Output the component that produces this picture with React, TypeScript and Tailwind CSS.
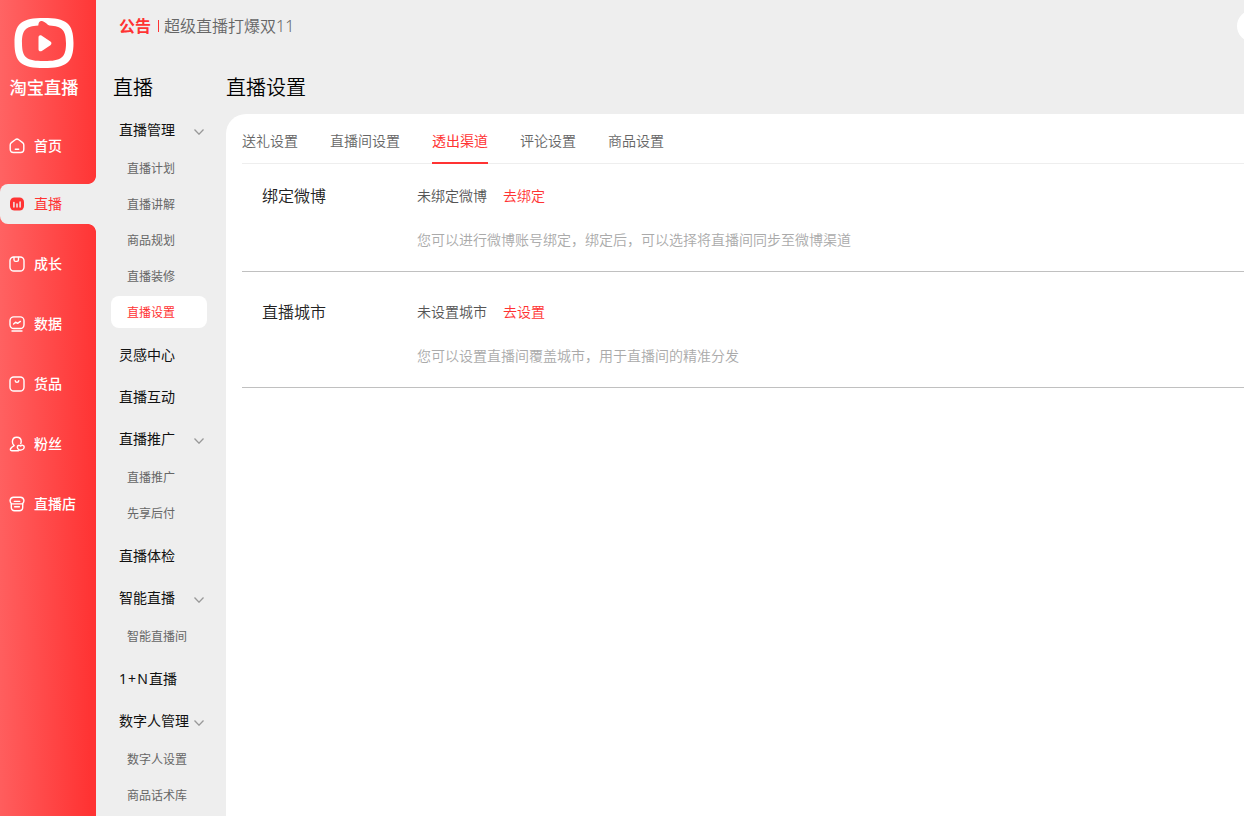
import type { ReactNode } from "react";
import clsx from "clsx";

const NAV: { label: string; icon: ReactNode }[] = [
  {
    label: "首页",
    icon: (
      <>
        <path d="M1.2 7c0-1 .4-1.8 1.2-2.4l3.8-2.9c1-.8 2.6-.8 3.6 0l3.8 2.9c.8.6 1.2 1.400 1.2 2.4v4.300c0 2-1.200 3.200-3.200 3.200H4.400c-2 0-3.200-1.200-3.200-3.200z" />
        <path d="M6.300 11.200h3.400" />
      </>
    ),
  },
  {
    label: "直播",
    icon: (
      <>
        <rect x="1" y="1.5" width="14" height="13" rx="4.5" fill="currentColor" stroke="none" />
        <path d="M4.9 6.5V11M8 8v3M11.1 6v5" stroke="#eee" strokeWidth="1.5" />
      </>
    ),
  },
  {
    label: "成长",
    icon: (
      <>
        <rect x="1" y="1" width="14" height="14" rx="3.8" />
        <path d="M5 1.500v2.200c0 1 .6 1.700 1.600 1.700h1.300c1 0 1.600-.7 1.600-1.700V1.500" />
      </>
    ),
  },
  {
    label: "数据",
    icon: (
      <>
        <rect x="1" y=".9" width="14" height="11.6" rx="3.8" />
        <path d="M4.600 8l2-1.800 2 1.200 2.800-2M3 15h10" />
      </>
    ),
  },
  {
    label: "货品",
    icon: (
      <>
        <rect x="1" y="1" width="14" height="14" rx="3.8" />
        <path d="M6.200 4.600c.2 2.400 3.400 2.400 3.600 0" />
      </>
    ),
  },
  {
    label: "粉丝",
    icon: (
      <>
        <path d="M9.500 14.700H2.700c-1.300 0-1.700-1.100-1-2.200.8-1.300 2-2.200 3.500-2.900C4 8.700 3.400 7.300 3.400 5.700c0-2.700 1.700-4.500 4.400-4.500s4.400 1.800 4.400 4.300c0 .9-.2 1.500-.5 2.200" />
        <path d="M10.800 14.300c-1.700-.8-2.500-1.800-2.500-3.100 0-1.800 2-2.400 3.200-1.100 1.300-1.500 3.700-.9 3.700 1 0 1.600-1.700 3.200-4.400 3.200z" />
      </>
    ),
  },
  {
    label: "直播店",
    icon: (
      <>
        <path d="M4.600 1.200h6.800c2 0 3.300 1.200 3.500 3.200.1 1.400-.3 2.400-1.200 3v3.800c0 2.100-1.200 3.500-3.300 3.500H5.600c-2.100 0-3.300-1.400-3.300-3.500V7.400c-.9-.6-1.300-1.600-1.200-3 .2-2 1.500-3.200 3.500-3.200z" />
        <path d="M5.300 5.400h5.400M2.300 7.900h11.400M5.600 10.700h4.800" />
      </>
    ),
  },
];

const MENU: { label: string; prefix?: string; children?: string[] }[] = [
  { label: "直播管理", children: ["直播计划", "直播讲解", "商品规划", "直播装修", "直播设置"] },
  { label: "灵感中心" },
  { label: "直播互动" },
  { label: "直播推广", children: ["直播推广", "先享后付"] },
  { label: "直播体检" },
  { label: "智能直播", children: ["智能直播间"] },
  { prefix: "1+N", label: "直播" },
  { label: "数字人管理", children: ["数字人设置", "商品话术库"] },
];

const TABS = ["送礼设置", "直播间设置", "透出渠道", "评论设置", "商品设置"];

const SETTINGS = [
  {
    title: "绑定微博",
    status: "未绑定微博",
    action: "去绑定",
    desc: "您可以进行微博账号绑定，绑定后，可以选择将直播间同步至微博渠道",
  },
  {
    title: "直播城市",
    status: "未设置城市",
    action: "去设置",
    desc: "您可以设置直播间覆盖城市，用于直播间的精准分发",
  },
];

function Logo() {
  return (
    <svg width="60" height="51" viewBox="0 0 60 51" fill="#fff" className="block">
      <path
        fillRule="evenodd"
        d="M30 0C52 0 59.5 5 59.5 25S52 50 30 50 .5 45 .5 25 8 0 30 0zM25.300 4c-.7 1-.8 2.200-1 3.400C11.500 8 8 12 8 25.200 8 39.500 12.500 43 30 43s22-3.500 22-17.800C52 12 48 8 35.500 7.400c-1-.1-1.500-.4-2.200-1.100-1.400-1.300-3-2.500-4.600-3-1.500-.4-2.700-.1-3.400.7z"
      />
      <path d="M24.5 19.500c0-2 1.7-2.700 3.300-1.700l8.600 5.700c1.400 1 1.400 2.700 0 3.700l-8.600 5.700c-1.600 1-3.300.2-3.300-1.700z" />
    </svg>
  );
}

function Sidebar() {
  return (
    <aside className="flex w-24 shrink-0 flex-col bg-[linear-gradient(91deg,#ff6464_0%,#ff3333_94%)] text-white">
      <div className="flex h-[118px] flex-col pt-[18px] pl-[13.5px]">
        <Logo />
        <span className="-ml-1 mt-[6px] text-[17.3px] leading-[26px] font-medium">淘宝直播</span>
      </div>
      <nav>
        {NAV.map((item) => {
          const active = item.label === "直播";
          return (
            <a
              key={item.label}
              className={clsx(
                "relative flex items-center gap-2 pl-[9px] text-sm",
                active && "mb-2.5 h-10 rounded-l-lg bg-[#eee] text-[#ff3333]",
                item.label === "首页" && "mb-2.5 h-14",
                !active && "font-medium",
                !active && item.label !== "首页" && "h-[60px]"
              )}
            >
              {active && (
                <>
                  <i className="absolute -top-2 right-0 size-2 bg-[radial-gradient(circle_at_0_0,transparent_7.5px,#eee_8.2px)]" />
                  <i className="absolute right-0 -bottom-2 size-2 bg-[radial-gradient(circle_at_0_100%,transparent_7.5px,#eee_8.2px)]" />
                </>
              )}
              <svg
                width="16"
                height="16"
                viewBox="0 0 16 16"
                fill="none"
                stroke="currentColor"
                strokeWidth="1.4"
                strokeLinecap="round"
                strokeLinejoin="round"
                className="shrink-0"
              >
                {item.icon}
              </svg>
              <span className="pl-px">{item.label}</span>
            </a>
          );
        })}
      </nav>
    </aside>
  );
}

function SubMenu() {
  return (
    <div className="w-[130px] shrink-0">
      <h2 className="h-[57px] pt-4 pl-[17px] text-xl leading-[40px] font-[350] text-black">直播</h2>
      {MENU.map((group, i) => (
        <div key={i}>
          <div className="flex h-[42px] items-center justify-between pr-[22px] pl-[23px] text-sm whitespace-nowrap text-[#111]">
            <span>
              {group.prefix && <span className="tracking-[1.1px]">{group.prefix}</span>}
              {group.label}
            </span>
            {group.children && (
              <svg width="10" height="6" viewBox="0 0 10 6" fill="none" stroke="#999" strokeWidth="1.3" className="mt-[3px]">
                <path d="M.5.5 5 5.2 9.5.5" />
              </svg>
            )}
          </div>
          {group.children && (
            <ul className="-mt-px mb-1 pl-[15px]">
              {group.children.map((name) => (
                <li key={name} className="flex h-9 items-center">
                  <a
                    className={clsx(
                      "flex h-8 w-24 items-center rounded-lg pt-0.5 pl-4 text-xs",
                      name === "直播设置" ? "bg-white text-[#ff3333]" : "text-[#666]"
                    )}
                  >
                    {name}
                  </a>
                </li>
              ))}
            </ul>
          )}
        </div>
      ))}
    </div>
  );
}

export default function App() {
  return (
    <div className="flex h-[816px] w-[1244px] overflow-hidden bg-[#eee] font-['Noto_Sans','Noto_Sans_CJK_SC',sans-serif]">
      <Sidebar />
      <div className="flex min-w-0 flex-1 flex-col">
        <header className="flex h-[52px] shrink-0 items-center justify-between pl-[23px]">
          <div className="flex items-center text-base">
            <b className="font-bold text-[#ff3333]">公告</b>
            <i className="mr-[5px] ml-[7px] h-3 w-px bg-[#ff3333]" />
            <span className="font-[350] text-[#666]">超级直播打爆双11</span>
          </div>
          <div className="-mr-[25px] size-8 rounded-full bg-white" />
        </header>

        <div className="flex min-h-0 flex-1">
          <SubMenu />
          <main className="flex min-w-0 flex-1 flex-col">
            <h1 className="h-[62px] shrink-0 pt-4 text-xl leading-[40px] font-[350] text-black">直播设置</h1>
            <section className="flex-1 rounded-tl-[20px] bg-white pl-4 font-[350]">
              <div className="flex h-[50px] gap-8 border-b border-[#eee] text-sm">
                {TABS.map((tab) => (
                  <a
                    key={tab}
                    className={clsx(
                      "-mb-px flex items-center border-b-2 pt-1.5",
                      tab === "透出渠道"
                        ? "border-[#ff3333] font-normal text-[#ff3333]"
                        : "border-transparent text-[#666]"
                    )}
                  >
                    {tab}
                  </a>
                ))}
              </div>
              {SETTINGS.map((row) => (
                <div
                  key={row.title}
                  className="flex h-[116px] border-b border-[#c0c0c0] pt-[30px] pl-5 nth-[2]:h-[108px] nth-[2]:pt-[22px]"
                >
                  <div className="w-[155px] text-base leading-5 text-[#222]">{row.title}</div>
                  <div className="text-sm leading-5">
                    <div className="flex gap-4">
                      <span className="text-[#555]">{row.status}</span>
                      <a className="text-[#ff3333]">{row.action}</a>
                    </div>
                    <p className="mt-6 text-[#aaa]">{row.desc}</p>
                  </div>
                </div>
              ))}
            </section>
          </main>
        </div>
      </div>
    </div>
  );
}
